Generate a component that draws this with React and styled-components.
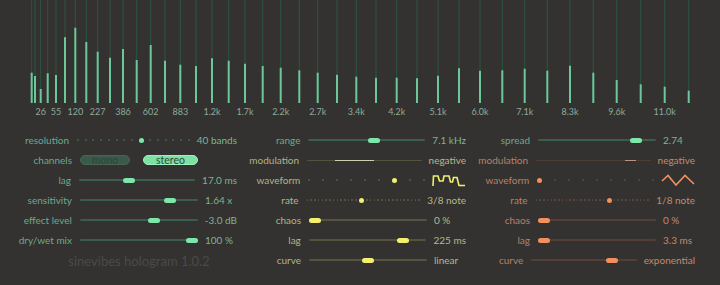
import React from 'react';
import styled, { createGlobalStyle } from 'styled-components';

const GlobalStyle = createGlobalStyle`
    html, body {
        margin: 0;
        padding: 0;
        background: #333230;
    }
    body {
        font-family: Lato, "Open Sans", sans-serif;
    }
`

const palette = {
    green: { label: '#6da98b', value: '#79b595', bright: '#7fe6aa', track: '#3a5d4d', dot: '#3e6553' },
    yellow: { label: '#b3b386', value: '#b8b88a', bright: '#f2f06e', track: '#54533e', dot: '#5a5a43' },
    orange: { label: '#b98068', value: '#c08a70', bright: '#f0905e', track: '#533f36', dot: '#5e4a40' },
}

const bars = [
    [31.7, 72.7], [35, 76], [40.7, 89], [47.7, 73.3], [56, 75], [65, 37.3], [75.3, 27.7], [86.3, 42],
    [97.7, 51.7], [110, 57.7], [123, 49], [136.7, 60], [150.7, 45], [165, 60.7], [180.3, 64.7], [196, 66],
    [212, 58.3], [228.7, 60.7], [245, 63.7], [262.7, 66], [280.7, 67.7], [299.3, 70.3], [317.7, 72.7],
    [337, 74.7], [356.3, 76.7], [376, 77.7], [396.7, 77.7], [417, 78.3], [438, 75.7], [459, 68.3],
    [480, 70.7], [502.3, 70.3], [524.7, 68.7], [547.3, 70.7], [570, 65.7], [593.3, 72.7], [616.7, 80],
    [640.7, 84.3], [664.7, 86.7], [688.7, 90.7],
]

const freqLabels = ['26', '55', '120', '227', '386', '602', '883', '1.2k', '1.7k', '2.2k', '2.7k',
    '3.4k', '4.2k', '5.1k', '6.0k', '7.1k', '8.3k', '9.6k', '11.0k']

const Page = styled.div`
    width: 720px;
    height: 285px;
    overflow: hidden;
`

const Spectrum = styled.svg`
    display: block;
    width: 720px;
    height: 122px;
`

const FreqText = styled.text`
    font-family: Lato, sans-serif;
    font-size: 9px;
    fill: #8eaa9c;
`

const Panel = styled.div`
    display: flex;
    padding: 8px 0 0 8px;
`

const Column = styled.div`
    width: 229px;
    flex-shrink: 0;
    display: flex;
    flex-direction: column;
`

const Row = styled.div`
    display: flex;
    align-items: center;
    height: 20px;
`

const Label = styled.div`
    width: 64px;
    text-align: right;
    font-size: 10px;
    color: ${(props) => props.color};
    white-space: nowrap;
`

const Track = styled.div`
    position: relative;
    width: 118px;
    height: 20px;
    margin-left: 8px;
    display: flex;
    align-items: center;
`

const Line = styled.div`
    width: 100%;
    height: ${(props) => props.thick}px;
    background: ${(props) => props.color};
    border-radius: 1px;
`

const Thumb = styled.div`
    position: absolute;
    top: 7.5px;
    width: 12px;
    height: 5px;
    border-radius: 3px;
    background: ${(props) => props.color};
`

const Segment = styled.div`
    position: absolute;
    top: 9.5px;
    height: 1.5px;
    background: ${(props) => props.color};
`

const Dots = styled.div`
    width: 100%;
    display: flex;
    align-items: center;
    justify-content: space-between;
`

const Dot = styled.div`
    width: ${(props) => props.big ? 5 : props.size}px;
    height: ${(props) => props.big ? 5 : props.size}px;
    border-radius: 50%;
    background: ${(props) => props.color};
`

const Value = styled.div`
    margin-left: 7px;
    font-size: 10px;
    color: ${(props) => props.color};
    white-space: nowrap;
`

const Pills = styled.div`
    width: 118px;
    margin-left: 8px;
    display: flex;
    gap: 13px;
`

const Pill = styled.div`
    width: ${(props) => props.w}px;
    height: 10px;
    border-radius: 5px;
    box-sizing: border-box;
    display: flex;
    align-items: center;
    justify-content: center;
    font-size: 10.5px;
    line-height: 10px;
    background: ${(props) => props.active ? '#7fe0a6' : '#3c5a4b'};
    color: ${(props) => props.active ? '#2c4b3b' : '#2b4436'};
    border: 1px solid ${(props) => props.active ? '#9ff0c0' : '#456656'};
`

const Footer = styled.div`
    width: 118px;
    margin-left: 72px;
    height: 22px;
    display: flex;
    align-items: center;
    justify-content: center;
    white-space: nowrap;
    font-size: 13px;
    color: #4b4a47;
`

function Slider({ label, value, pos, tone, valueTone }) {
    const c = palette[tone];
    return (
        <Row>
            <Label color={palette[tone].label}>{label}</Label>
            <Track>
                <Line thick={2} color={c.track} />
                <Thumb color={c.bright} style={{ left: `calc(${pos} * (100% - 12px))` }} />
            </Track>
            <Value color={palette[valueTone || tone].value}>{value}</Value>
        </Row>
    );
}

function DotRow({ label, count, active, size, tone, children }) {
    const c = palette[tone];
    const dots = [];
    for (let i = 0; i < count; i++) {
        dots.push(<Dot key={i} big={i === active} size={size} color={i === active ? c.bright : c.dot} />);
    }
    return (
        <Row>
            <Label color={c.label}>{label}</Label>
            <Track>
                <Dots>{dots}</Dots>
            </Track>
            <Value color={c.value}>{children}</Value>
        </Row>
    );
}

function Modulation({ tone, from, to, segColor, lineColor }) {
    const c = palette[tone];
    return (
        <Row>
            <Label color={c.label}>modulation</Label>
            <Track>
                <Line thick={1} color={lineColor} />
                <Segment color={segColor} style={{ left: from, width: to - from }} />
            </Track>
            <Value color={c.value}>negative</Value>
        </Row>
    );
}

function SquareWave() {
    return (
        <svg width="34" height="14" viewBox="0 0 34 14" style={{ display: 'block', marginTop: 2 }}>
            <path d="M1,12 L1.5,2 L6,2 L7.5,7 L11,7 L12,2 L17,2 L18.5,8 L20.5,8 L21.5,3.5 L25,3.5 L27,11.5 L33,11.5"
                fill="none" stroke="#f2f06e" strokeWidth="1.6" strokeLinejoin="miter" />
        </svg>
    );
}

function TriangleWave() {
    return (
        <svg width="34" height="14" viewBox="0 0 34 14" style={{ display: 'block', marginTop: 2 }}>
            <path d="M1,7 L7,1.5 L15,11 L24,1.5 L33,10"
                fill="none" stroke="#f0905e" strokeWidth="1.6" />
        </svg>
    );
}

function SpectrumView() {
    return (
        <Spectrum viewBox="0 0 720 122">
            {bars.map(([x, top], i) => (
                <g key={i}>
                    <line x1={x} y1={0} x2={x} y2={103} stroke="#2e5447" strokeWidth="1" />
                    <line x1={x} y1={top} x2={x} y2={103} stroke="#6cc89b" strokeWidth="2" />
                </g>
            ))}
            {freqLabels.map((t, i) => (
                <FreqText key={t} x={bars[2 + i * 2][0]} y={114.5} textAnchor="middle">{t}</FreqText>
            ))}
        </Spectrum>
    );
}

export default function App() {
    return (
        <Page>
            <GlobalStyle />
            <SpectrumView />
            <Panel>
                <Column>
                    <DotRow label="resolution" count={15} active={8} size={2} tone="green">40 bands</DotRow>
                    <Row>
                        <Label color={palette.green.label}>channels</Label>
                        <Pills>
                            <Pill w={50}>mono</Pill>
                            <Pill w={55} active>stereo</Pill>
                        </Pills>
                    </Row>
                    <Slider label="lag" value="17.0 ms" pos={0.42} tone="green" />
                    <Slider label="sensitivity" value="1.64 x" pos={0.79} tone="green" />
                    <Slider label="effect level" value="-3.0 dB" pos={0.64} tone="green" />
                    <Slider label="dry/wet mix" value="100 %" pos={1} tone="green" />
                    <Footer>sinevibes hologram 1.0.2</Footer>
                </Column>
                <Column>
                    <Slider label="range" value="7.1 kHz" pos={0.57} tone="green" />
                    <Modulation tone="yellow" from={28} to={67} lineColor="#55543f" segColor="#cfcfae" />
                    <DotRow label="waveform" count={9} active={6} size={2} tone="yellow"><SquareWave /></DotRow>
                    <DotRow label="rate" count={30} active={14} size={1.6} tone="yellow">3/8 note</DotRow>
                    <Slider label="chaos" value="0 %" pos={0} tone="yellow" />
                    <Slider label="lag" value="225 ms" pos={0.83} tone="yellow" />
                    <Slider label="curve" value="linear" pos={0.5} tone="yellow" />
                </Column>
                <Column>
                    <Slider label="spread" value="2.74" pos={0.87} tone="green" />
                    <Modulation tone="orange" from={89} to={100} lineColor="#4f3e36" segColor="#b89282" />
                    <DotRow label="waveform" count={9} active={0} size={2} tone="orange"><TriangleWave /></DotRow>
                    <DotRow label="rate" count={30} active={19} size={1.6} tone="orange">1/8 note</DotRow>
                    <Slider label="chaos" value="0 %" pos={0} tone="orange" />
                    <Slider label="lag" value="3.3 ms" pos={0} tone="orange" />
                    <Slider label="curve" value="exponential" pos={0.8} tone="orange" />
                </Column>
            </Panel>
        </Page>
    );
}
